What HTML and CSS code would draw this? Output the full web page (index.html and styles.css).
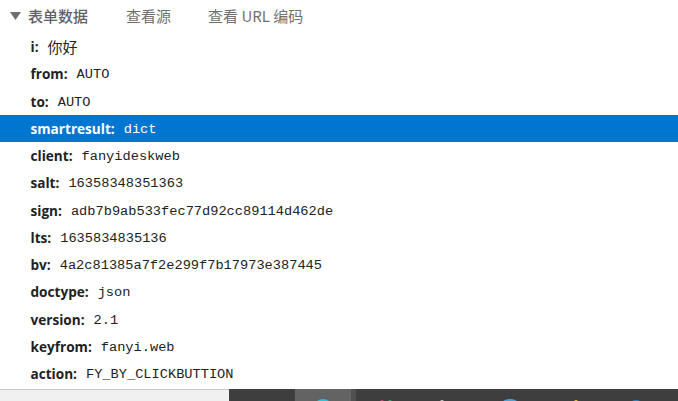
FILE: index.html
```html
<!DOCTYPE html>
<html lang="zh">
<head>
<meta charset="utf-8">
<title>表单数据</title>
<link rel="stylesheet" href="styles.css">
</head>
<body>
<div class="panel">
  <div class="head">
    <svg class="arrow" width="11" height="8" viewBox="0 0 11 8"><path d="M0 0H11L5.5 8Z" fill="#6e6e6e"/></svg>
    <span class="title">表单数据</span>
    <span class="tab tab-src">查看源</span>
    <span class="tab tab-url">查看 URL 编码</span>
  </div>
  <ul class="rows">
    <li class="row"><b>i:</b><span class="cjk">你好</span></li>
    <li class="row"><b>from:</b><span>AUTO</span></li>
    <li class="row"><b>to:</b><span>AUTO</span></li>
    <li class="row sel"><b>smartresult:</b><span>dict</span></li>
    <li class="row"><b>client:</b><span>fanyideskweb</span></li>
    <li class="row"><b>salt:</b><span>16358348351363</span></li>
    <li class="row"><b>sign:</b><span>adb7b9ab533fec77d92cc89114d462de</span></li>
    <li class="row"><b>lts:</b><span>1635834835136</span></li>
    <li class="row"><b>bv:</b><span>4a2c81385a7f2e299f7b17973e387445</span></li>
    <li class="row"><b>doctype:</b><span>json</span></li>
    <li class="row"><b>version:</b><span>2.1</span></li>
    <li class="row"><b>keyfrom:</b><span>fanyi.web</span></li>
    <li class="row"><b>action:</b><span>FY_BY_CLICKBUTTION</span></li>
  </ul>
</div>
<div class="bottom">
  <div class="scroll"></div>
  <div class="taskbar">
    <div class="task-gap"></div>
    <div class="task-active"><i class="ic ic-cyan"></i></div>
    <div class="task-sep"></div>
    <div class="task-icons">
      <i class="ic ic-a"></i><i class="ic ic-a2"></i><i class="ic ic-b"></i><i class="ic ic-c"></i><i class="ic ic-d"></i><i class="ic ic-e"></i>
    </div>
  </div>
</div>
</body>
</html>
```
FILE: styles.css
```css
html, body { margin: 0; padding: 0; }
body {
  width: 678px;
  height: 401px;
  overflow: hidden;
  background: #fff;
  display: flex;
  flex-direction: column;
  font-family: "Open Sans", "Noto Sans CJK SC", sans-serif;
}
.panel { flex: 1; min-height: 0; }
.head {
  height: 33px;
  box-sizing: border-box;
  padding: 0 0 2px 10px;
  display: flex;
  align-items: center;
  font-family: "Noto Sans CJK SC", sans-serif;
  font-size: 15px;
  color: #707070;
}
.arrow { margin-right: 7px; }
.title { font-weight: 500; color: #5f6368; }
.tab-src { margin-left: 38px; }
.tab-url { margin-left: 37px; }
.rows { list-style: none; margin: 0; padding: 0; }
.row {
  height: 27.25px;
  display: flex;
  align-items: center;
  padding-left: 30.5px;
  color: #222;
  font-family: "Liberation Mono", "Noto Sans CJK SC", monospace;
  font-size: 13.67px;
}
.row span { position: relative; top: 1px; }
.row b {
  font-family: "Open Sans", sans-serif;
  font-size: 13.6px;
  font-weight: 700;
  margin-right: 9px;
}
.row .cjk { font-family: "Noto Sans CJK SC", sans-serif; font-size: 15px; font-weight: 400; top: 0; }
.sel { background: #0076d1; color: #fff; }
.bottom { height: 12px; display: flex; flex: none; }
.scroll {
  width: 229px;
  background: #f0f0f0;
  border-top: 1px solid #c8c8c8;
  box-sizing: border-box;
}
.taskbar { flex: 1; display: flex; background: #3e3e3e; overflow: hidden; }
.task-gap { width: 66px; }
.task-active { width: 56px; background: #636363; display: flex; justify-content: center; }
.task-sep { width: 5px; background: #505050; }
.task-icons { flex: 1; position: relative; }
.ic { display: block; border-radius: 50%; }
.ic-cyan { width: 20px; height: 20px; background: #25c4d8; margin-top: 10px; }
.task-icons .ic { position: absolute; top: 11px; width: 4px; height: 4px; }
.task-icons .ic-a { left: 24px; background: #d0407a; }
.task-icons .ic-a2 { left: 32px; background: #3aa676; }
.task-icons .ic-b { left: 84px; background: #c8c8c8; }
.task-icons .ic-c { left: 146px; top: 10px; width: 16px; height: 8px; background: #4a9fd8; }
.task-icons .ic-d { left: 218px; background: #f0c030; }
.task-icons .ic-e { left: 274px; width: 12px; height: 8px; background: #2e86c8; }
```
